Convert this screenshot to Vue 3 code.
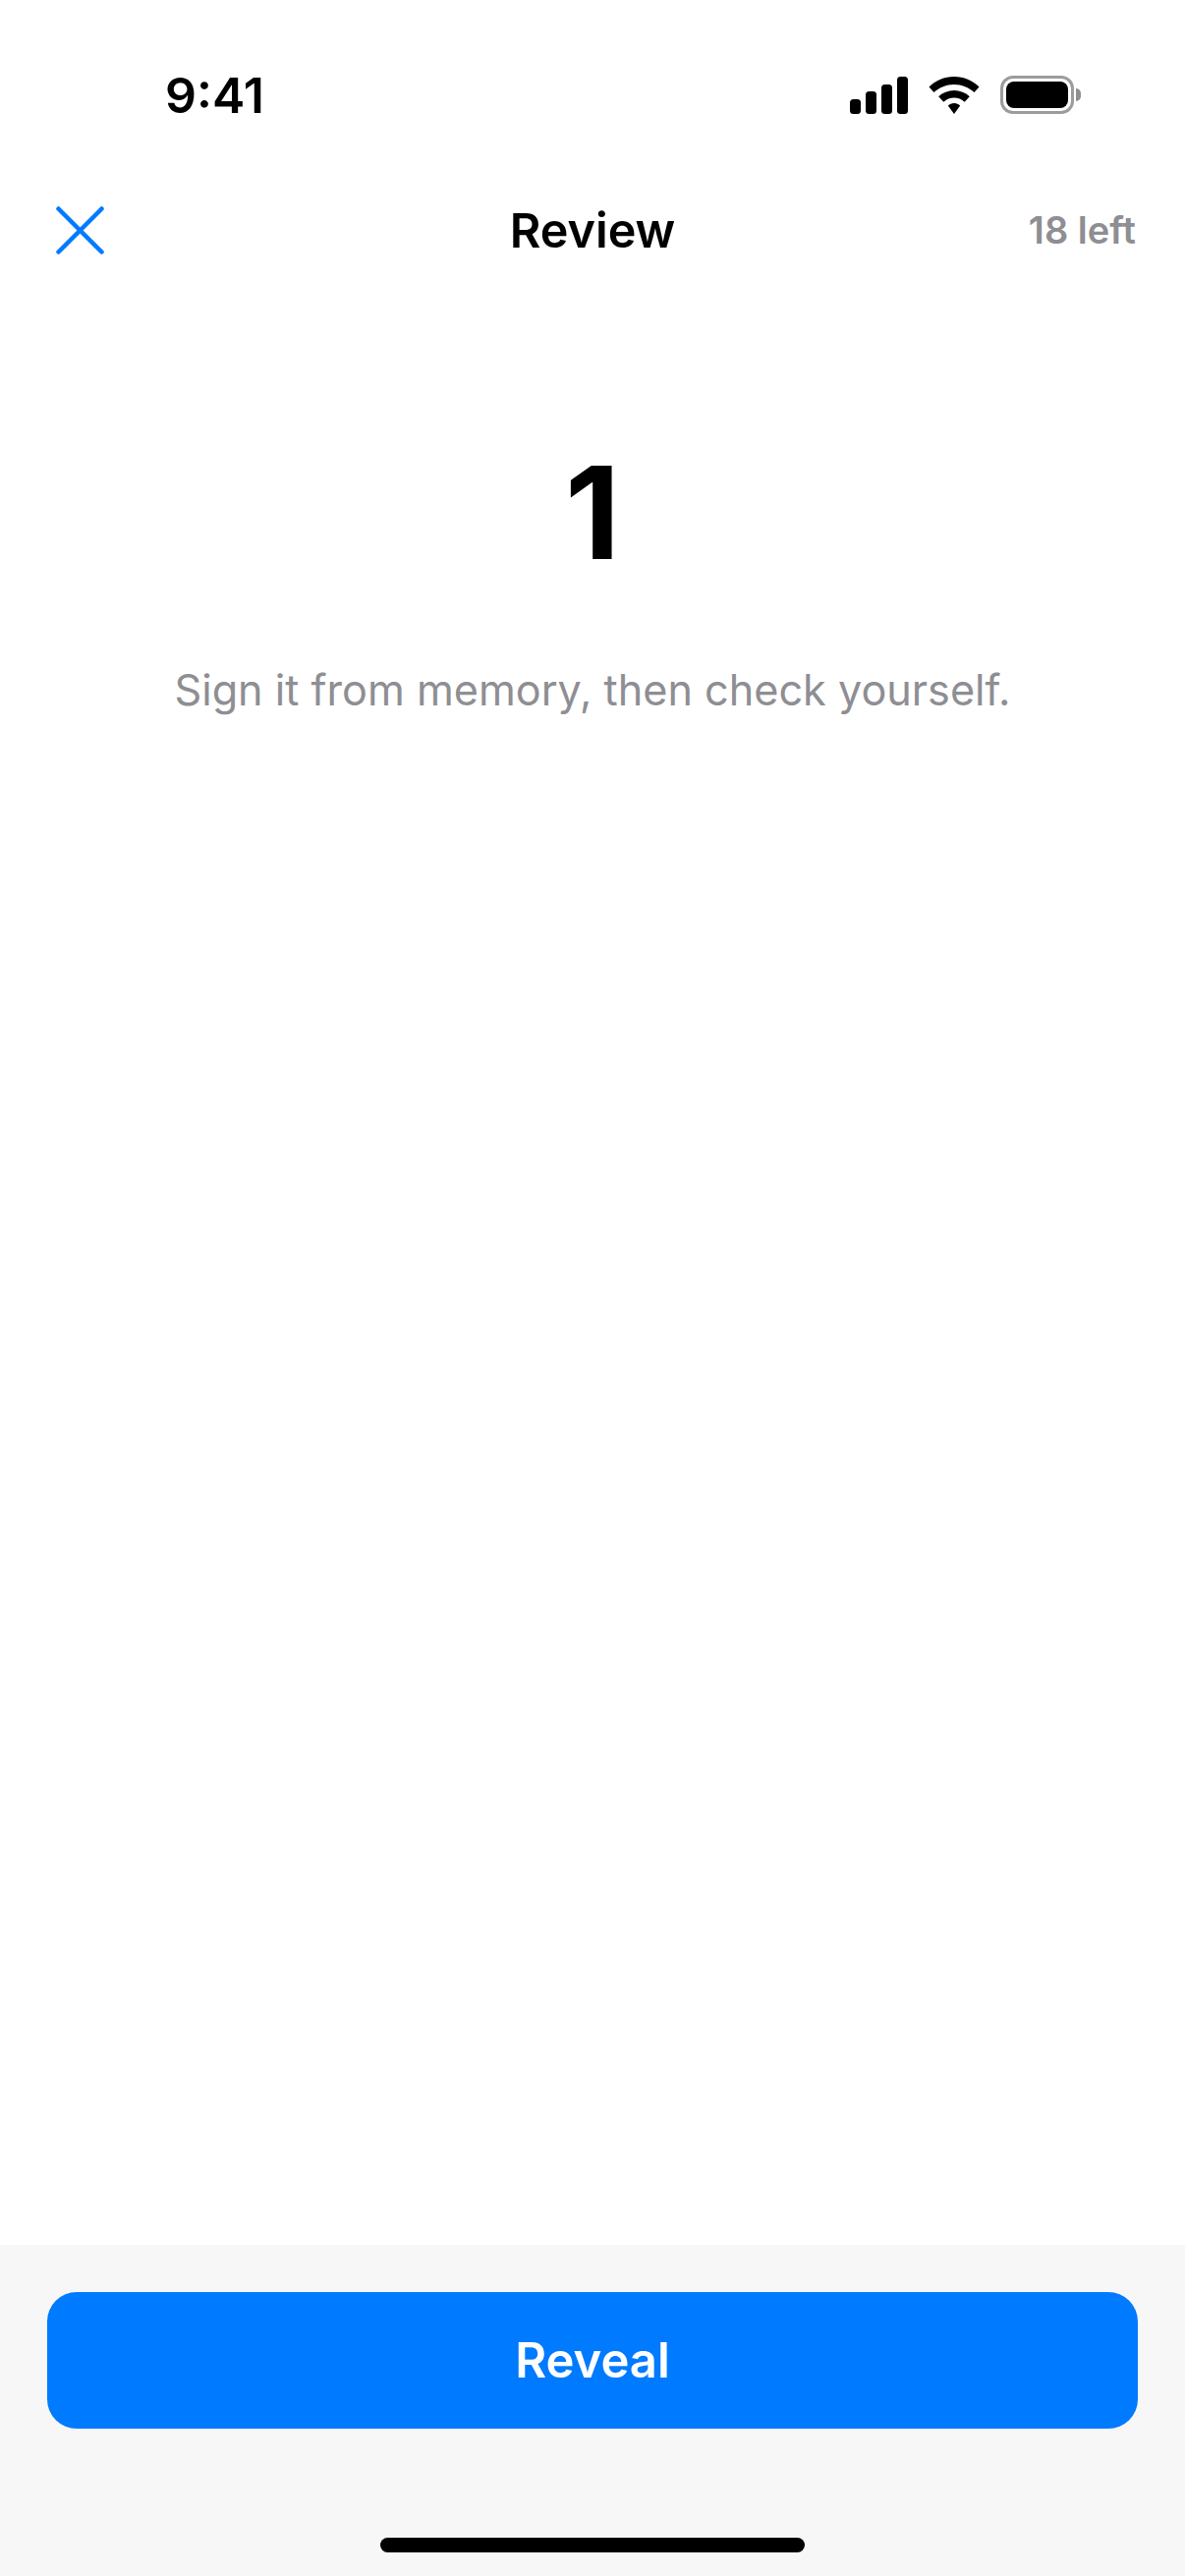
<template>
  <div class="screen">
    <div class="status-bar">
      <span class="time">9:41</span>
      <div class="status-icons">
        <svg class="signal" width="59" height="38" viewBox="0 0 59 38">
          <rect x="0" y="23" width="11" height="15" rx="3.500" />
          <rect x="16" y="15" width="11" height="23" rx="3.500" />
          <rect x="32" y="8" width="11" height="30" rx="3.500" />
          <rect x="48" y="0" width="11" height="38" rx="3.500" />
        </svg>
        <svg class="wifi" width="52" height="38" viewBox="0 0 52 38">
          <path d="M26 0C16 0 7.500 3.800 0.500 10.500L5.500 16C11 11 18 8 26 8C34 8 41 11 46.500 16L51.500 10.500C44.500 3.800 36 0 26 0Z" />
          <path d="M26 14C20 14 14.500 16.300 10.200 20.200L15.300 25.700C18.200 23.100 22 21.500 26 21.500C30 21.500 33.800 23.100 36.700 25.700L41.800 20.200C37.500 16.300 32 14 26 14Z" />
          <path d="M26 27C23.500 27 21.500 27.900 19.800 29.400L26 38L32.200 29.400C30.500 27.900 28.500 27 26 27Z" />
        </svg>
        <div class="battery">
          <div class="battery-body"><div class="battery-fill"></div></div>
          <div class="battery-cap"></div>
        </div>
      </div>
    </div>

    <header class="nav">
      <button class="close" aria-label="Close">
        <svg width="54" height="54" viewBox="0 0 54 54" fill="none">
          <path d="M5.500 5.500L49.500 49.500M49.500 5.500L5.500 49.500" stroke="#007aff" stroke-width="4.500" stroke-linecap="round" />
        </svg>
      </button>
      <h1 class="title">Review</h1>
      <span class="left">18 left</span>
    </header>

    <main class="content">
      <div class="number">1</div>
      <p class="hint">Sign it from memory, then check yourself.</p>
    </main>

    <footer class="footer">
      <button class="reveal">Reveal</button>
      <div class="home-indicator"></div>
    </footer>
  </div>
</template>

<script setup>
</script>

<style>
html, body {
  margin: 0;
  background: #fff;
}
</style>

<style scoped>
.screen {
  width: 1206px;
  height: 2622px;
  display: flex;
  flex-direction: column;
  background: #fff;
  font-family: Inter, "Liberation Sans", sans-serif;
  overflow: hidden;
}

.status-bar {
  height: 140px;
  padding: 0 106px 0 168px;
  display: flex;
  align-items: flex-end;
  justify-content: space-between;
  box-sizing: border-box;
  flex-shrink: 0;
}

.time {
  font-size: 50px;
  font-weight: 600;
  line-height: 60px;
  color: #000;
  margin-bottom: 13px;
}

.status-icons {
  display: flex;
  align-items: center;
  gap: 21px;
  margin-bottom: 24px;
}

.signal, .wifi {
  fill: #000;
}

.battery {
  display: flex;
  align-items: center;
  gap: 2px;
}

.battery-body {
  width: 75px;
  height: 39px;
  box-sizing: border-box;
  border: 3px solid #9c9c9e;
  border-radius: 13px;
  padding: 3px;
}

.battery-fill {
  width: 100%;
  height: 100%;
  background: #000;
  border-radius: 8px;
}

.battery-cap {
  width: 5px;
  height: 13px;
  background: #8f8f91;
  border-radius: 0 5px 5px 0;
}

.nav {
  height: 92px;
  margin-top: 48px;
  padding: 0 50px 0 54px;
  display: flex;
  align-items: center;
  justify-content: space-between;
  position: relative;
  flex-shrink: 0;
}

.close {
  padding: 0;
  border: 0;
  background: none;
  display: flex;
}

.title {
  position: absolute;
  left: 0;
  right: 0;
  margin: 0;
  text-align: center;
  font-size: 48.500px;
  font-weight: 600;
  color: #000;
  pointer-events: none;
}

.left {
  font-size: 38px;
  font-weight: 600;
  color: #8e8e93;
}

.content {
  flex: 1;
  display: flex;
  flex-direction: column;
  align-items: center;
  padding-top: 162px;
}

.number {
  font-size: 130px;
  font-weight: 700;
  line-height: 160px;
  color: #000;
}

.hint {
  margin: 73px 0 0;
  font-size: 43.200px;
  line-height: 54px;
  color: #8e8e93;
}

.footer {
  height: 337px;
  flex-shrink: 0;
  box-sizing: border-box;
  padding: 48px 48px 0;
  background: #f7f7f7;
  display: flex;
  flex-direction: column;
  align-items: center;
}

.reveal {
  width: 100%;
  height: 139px;
  border: 0;
  border-radius: 30px;
  background: #007aff;
  color: #fff;
  font-family: inherit;
  font-size: 49px;
  font-weight: 600;
}

.home-indicator {
  width: 432px;
  height: 15px;
  margin-top: 111px;
  border-radius: 8px;
  background: #000;
}
</style>
